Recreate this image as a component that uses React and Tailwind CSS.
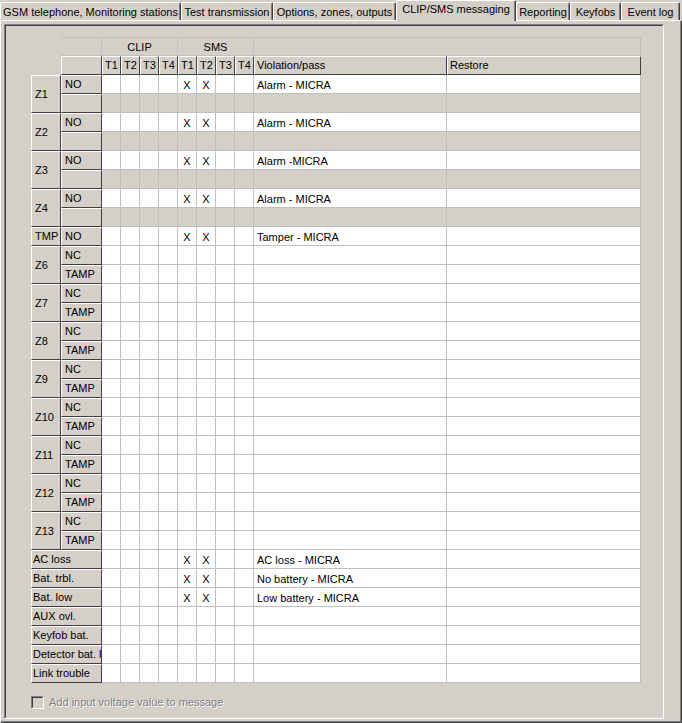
import React from 'react'

const FIXED =
  'bg-[#d4d0c8] border border-t-white border-l-white border-r-[#404040] border-b-[#404040] overflow-hidden whitespace-nowrap'
const FLAT = 'bg-[#d4d0c8] border-r border-b border-[#c0c0c0]'
const DATA = 'border-r border-b border-[#c0c0c0] whitespace-nowrap overflow-hidden'

const zones = [
  { label: 'Z1', rows: [{ type: 'NO', x: true, text: 'Alarm - MICRA' }, { gray: true }] },
  { label: 'Z2', rows: [{ type: 'NO', x: true, text: 'Alarm - MICRA' }, { gray: true }] },
  { label: 'Z3', rows: [{ type: 'NO', x: true, text: 'Alarm -MICRA' }, { gray: true }] },
  { label: 'Z4', rows: [{ type: 'NO', x: true, text: 'Alarm - MICRA' }, { gray: true }] },
  { label: 'TMP', rows: [{ type: 'NO', x: true, text: 'Tamper - MICRA' }] },
  ...['Z6', 'Z7', 'Z8', 'Z9', 'Z10', 'Z11', 'Z12', 'Z13'].map(label => ({
    label,
    rows: [{ type: 'NC' }, { type: 'TAMP' }]
  }))
]

const system = [
  { label: 'AC loss', x: true, text: 'AC loss - MICRA' },
  { label: 'Bat. trbl.', x: true, text: 'No battery - MICRA' },
  { label: 'Bat. low', x: true, text: 'Low battery - MICRA' },
  { label: 'AUX ovl.' },
  { label: 'Keyfob bat.' },
  { label: 'Detector bat. low' },
  { label: 'Link trouble' }
]

const tabs = [
  { name: 'GSM telephone, Monitoring stations', w: 'w-[181px]' },
  { name: 'Test transmission', w: 'w-[92px]' },
  { name: 'Options, zones, outputs', w: 'w-[123px]' },
  { name: 'CLIP/SMS messaging', w: 'w-[120px]', active: true },
  { name: 'Reporting', w: 'w-[54px]' },
  { name: 'Keyfobs', w: 'w-[51px]' },
  { name: 'Event log', w: 'w-[59px]' }
]

const DataCells = ({ row }) => {
  const bg = row.gray ? 'bg-[#d4d0c8]' : 'bg-white'
  return (
    <>
      {Array.from({ length: 8 }).map((_, i) => (
        <div key={i} className={`${DATA} ${bg} text-center pt-[4px] leading-[13px]`}>
          {row.x && (i === 4 || i === 5) ? 'X' : ''}
        </div>
      ))}
      <div className={`${DATA} ${bg} pl-[3px] pt-[4px] leading-[13px]`}>{row.text}</div>
      <div className={`${DATA} ${bg}`}></div>
    </>
  )
}

const Tab = ({ tab }) => {
  if (tab.active) {
    return (
      <div
        className={`${tab.w} h-[21px] -mb-[1px] relative z-10 bg-[#d4d0c8] border-t border-l border-r border-t-white border-l-white border-r-[#404040] shadow-[inset_-1px_0_0_#808080] rounded-t-[2px] flex justify-center pt-[2px] leading-[13px]`}
      >
        {tab.name}
      </div>
    )
  }
  return (
    <div
      className={`${tab.w} h-[18px] bg-[#d4d0c8] border-t border-l border-r border-t-white border-l-white border-r-[#404040] shadow-[inset_-1px_0_0_#808080] rounded-t-[2px] flex justify-center pt-[3px] leading-[13px] whitespace-nowrap`}
    >
      {tab.name}
    </div>
  )
}

export default function App() {
  return (
    <div className="w-[682px] h-[723px] bg-[#d4d0c8] text-black text-[11px] font-['Liberation_Sans',Arial,sans-serif] flex flex-col overflow-hidden">
      {/* Tabs */}
      <div className="h-[20px] flex items-end shrink-0">
        {tabs.map(t => (
          <Tab key={t.name} tab={t} />
        ))}
      </div>

      {/* Tab page */}
      <div className="flex-1 border border-t-white border-l-white border-r-[#404040] border-b-[#404040] shadow-[inset_-1px_-1px_0_#808080] pl-[3px] pt-[3px]">
        <div className="w-[660px] h-[695px] border border-t-[#808080] border-l-[#808080] border-r-white border-b-white">
          <div className="h-full border border-t-[#404040] border-l-[#404040] border-r-[#d4d0c8] border-b-[#d4d0c8] pl-[25px] pt-[11px]">
            {/* Grid */}
            <div className="grid grid-cols-[30px_41px_repeat(8,19px)_193px_194px] auto-rows-[19px] w-[610px]">
              {/* header row 1 */}
              <div className="row-span-2"></div>
              <div className={`${FLAT} border-t`}></div>
              <div className={`${FLAT} border-t col-span-4 text-center pt-[3px] leading-[13px]`}>CLIP</div>
              <div className={`${FLAT} border-t col-span-4 text-center pt-[3px] leading-[13px]`}>SMS</div>
              <div className={`${FLAT} border-t col-span-2`}></div>

              {/* header row 2 */}
              <div className={FIXED}></div>
              {['T1', 'T2', 'T3', 'T4', 'T1', 'T2', 'T3', 'T4'].map((t, i) => (
                <div key={i} className={`${FIXED} pl-[2px] pt-[2px] leading-[13px]`}>
                  {t}
                </div>
              ))}
              <div className={`${FIXED} pl-[2px] pt-[2px] leading-[13px]`}>Violation/pass</div>
              <div className={`${FIXED} pl-[2px] pt-[2px] leading-[13px]`}>Restore</div>

              {/* zone rows */}
              {zones.map(z => (
                <React.Fragment key={z.label}>
                  {z.rows.map((r, ri) => (
                    <React.Fragment key={ri}>
                      {ri === 0 && (
                        <div
                          className={`${FIXED} ${z.rows.length === 2 ? 'row-span-2 flex items-center' : 'pt-[2px] leading-[13px]'} pl-[3px]`}
                        >
                          {z.label}
                        </div>
                      )}
                      <div className={`${FIXED} pl-[3px] pt-[2px] leading-[13px]`}>{r.type}</div>
                      <DataCells row={r} />
                    </React.Fragment>
                  ))}
                </React.Fragment>
              ))}

              {/* system rows */}
              {system.map(s => (
                <React.Fragment key={s.label}>
                  <div className={`${FIXED} col-span-2 pl-[1px] pt-[2px] leading-[13px]`}>{s.label}</div>
                  <DataCells row={s} />
                </React.Fragment>
              ))}
            </div>

            {/* Checkbox */}
            <div className="flex items-center gap-[5px] mt-[13px]">
              <div className="w-[13px] h-[13px] border border-t-[#808080] border-l-[#808080] border-r-white border-b-white">
                <div className="w-full h-full border border-t-[#404040] border-l-[#404040] border-r-[#d4d0c8] border-b-[#d4d0c8] bg-[#d4d0c8]"></div>
              </div>
              <span className="text-[#808080] [text-shadow:1px_1px_0_#ffffff] leading-[13px]">
                Add input voltage value to message
              </span>
            </div>
          </div>
        </div>
      </div>
    </div>
  )
}
